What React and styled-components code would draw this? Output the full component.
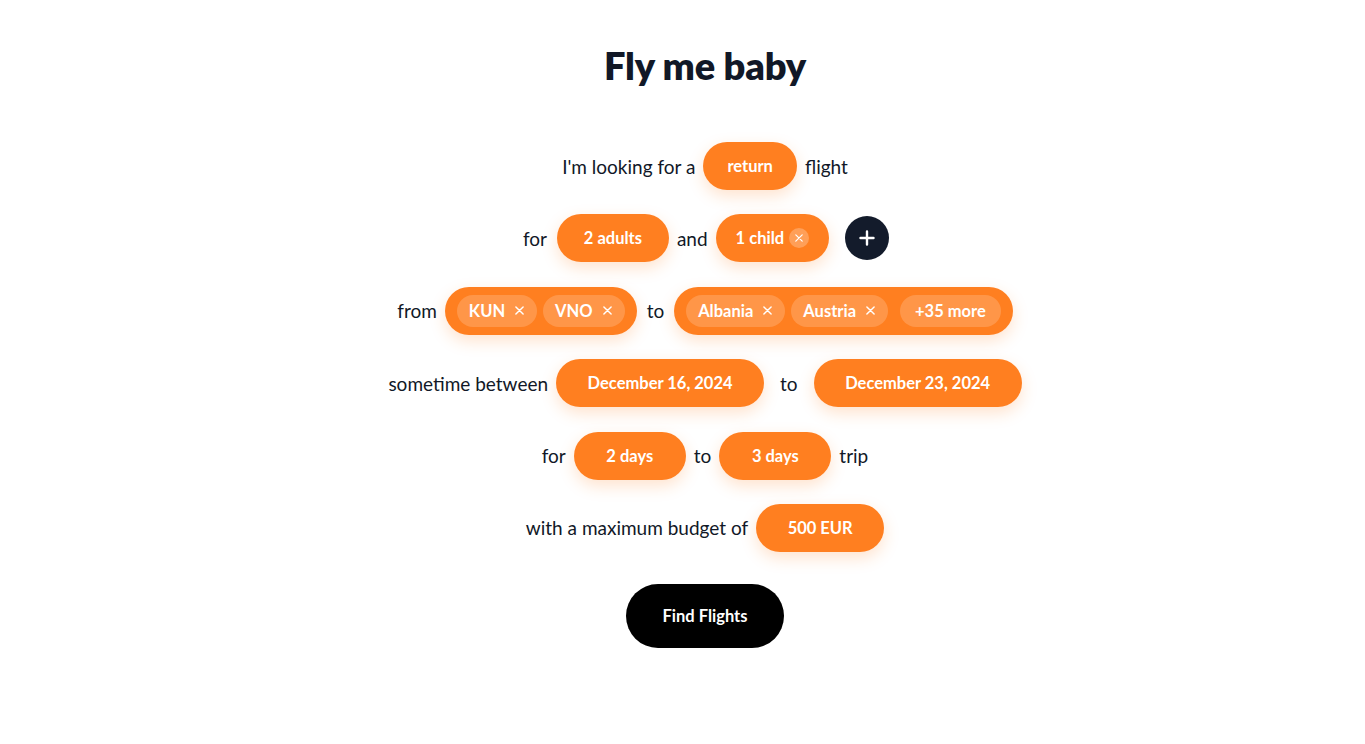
import React from "react";
import styled, { createGlobalStyle } from "styled-components";

const Global = createGlobalStyle`
  html, body { margin: 0; padding: 0; background: #ffffff; }
  body { font-family: Lato, "Noto Sans", sans-serif; color: #111827; }
`;

const Page = styled.main`
  display: flex;
  flex-direction: column;
  align-items: center;
  padding: 43px 0 0 45px;
`;

const Title = styled.h1`
  margin: 0 0 55px;
  font-size: 38px;
  line-height: 44px;
  font-weight: 800;
  color: #111827;
  letter-spacing: -0.2px;
`;

const Form = styled.div`
  display: flex;
  flex-direction: column;
  align-items: center;
  gap: 24.4px;
`;

const Row = styled.div`
  display: flex;
  align-items: center;
  justify-content: center;
  gap: 8px;
  height: 48px;
`;

const Word = styled.span`
  font-size: 19px;
  color: #111827;
  white-space: nowrap;
  margin: 0 ${(p) => p.$mx || 0}px;
`;

const Pill = styled.button`
  display: inline-flex;
  align-items: center;
  justify-content: center;
  gap: 5px;
  height: 48px;
  min-width: ${(p) => p.$w || 0}px;
  padding: 0 ${(p) => (p.$px ?? 24)}px;
  border: none;
  border-radius: 999px;
  background: #ff7f20;
  color: #ffffff;
  font-family: inherit;
  font-size: 16.5px;
  font-weight: 700;
  box-shadow: 0 6px 16px rgba(255, 127, 32, 0.22);
  cursor: pointer;
  white-space: nowrap;
`;

const ChipGroup = styled.div`
  display: inline-flex;
  align-items: center;
  gap: 6px;
  height: 48px;
  padding: 0 12px;
  border-radius: 999px;
  background: #ff7f20;
  box-shadow: 0 6px 16px rgba(255, 127, 32, 0.22);
`;

const Chip = styled.span`
  display: inline-flex;
  align-items: center;
  gap: 10px;
  height: 32px;
  padding: 0 ${(p) => (p.$plain ? 15 : 13)}px 0 ${(p) => (p.$plain ? 15 : 12)}px;
  margin-left: ${(p) => p.$ml || 0}px;
  border-radius: 999px;
  background: rgba(255, 255, 255, 0.18);
  color: #ffffff;
  font-size: 16.5px;
  font-weight: 700;
  white-space: nowrap;
`;

const RemoveBadge = styled.span`
  display: inline-flex;
  align-items: center;
  justify-content: center;
  width: 20px;
  height: 20px;
  border-radius: 50%;
  background: rgba(255, 255, 255, 0.25);
`;

const AddButton = styled.button`
  display: inline-flex;
  align-items: center;
  justify-content: center;
  width: 44px;
  height: 44px;
  margin-left: 8px;
  border: none;
  border-radius: 50%;
  background: #131b2b;
  cursor: pointer;
  padding: 0;
`;

const FindButton = styled.button`
  margin-top: 32px;
  width: 158px;
  height: 64px;
  border: none;
  border-radius: 999px;
  background: #000000;
  color: #ffffff;
  font-family: inherit;
  font-size: 16.5px;
  font-weight: 700;
  cursor: pointer;
`;

const Cross = ({ size = 9, w = 1.6 }) => (
  <svg width={size} height={size} viewBox="0 0 10 10" fill="none">
    <path d="M1 1L9 9M9 1L1 9" stroke="#ffffff" strokeWidth={w} strokeLinecap="round" />
  </svg>
);

const Plus = () => (
  <svg width="16" height="16" viewBox="0 0 16 16" fill="none">
    <path d="M8 1.5V14.5M1.5 8H14.5" stroke="#ffffff" strokeWidth="2.4" strokeLinecap="round" />
  </svg>
);

export default function App() {
  return (
    <>
      <Global />
      <Page>
        <Title>Fly me baby</Title>
        <Form>
          <Row>
            <Word>I'm looking for a</Word>
            <Pill>return</Pill>
            <Word>flight</Word>
          </Row>
          <Row>
            <Word $mx={2}>for</Word>
            <Pill $w={112}>2 adults</Pill>
            <Word>and</Word>
            <Pill $w={112} $px={20}>
              1 child
              <RemoveBadge>
                <Cross size={8} w={1.5} />
              </RemoveBadge>
            </Pill>
            <AddButton aria-label="add passenger">
              <Plus />
            </AddButton>
          </Row>
          <Row>
            <Word>from</Word>
            <ChipGroup>
              <Chip>
                KUN <Cross />
              </Chip>
              <Chip>
                VNO <Cross />
              </Chip>
            </ChipGroup>
            <Word $mx={2}>to</Word>
            <ChipGroup>
              <Chip>
                Albania <Cross />
              </Chip>
              <Chip>
                Austria <Cross />
              </Chip>
              <Chip $plain $ml={6}>+35 more</Chip>
            </ChipGroup>
          </Row>
          <Row>
            <Word>sometime between</Word>
            <Pill $w={208}>December 16, 2024</Pill>
            <Word $mx={8}>to</Word>
            <Pill $w={208}>December 23, 2024</Pill>
          </Row>
          <Row>
            <Word>for</Word>
            <Pill $w={112}>2 days</Pill>
            <Word>to</Word>
            <Pill $w={112}>3 days</Pill>
            <Word>trip</Word>
          </Row>
          <Row>
            <Word>with a maximum budget of</Word>
            <Pill $w={128}>500 EUR</Pill>
          </Row>
        </Form>
        <FindButton>Find Flights</FindButton>
      </Page>
    </>
  );
}
